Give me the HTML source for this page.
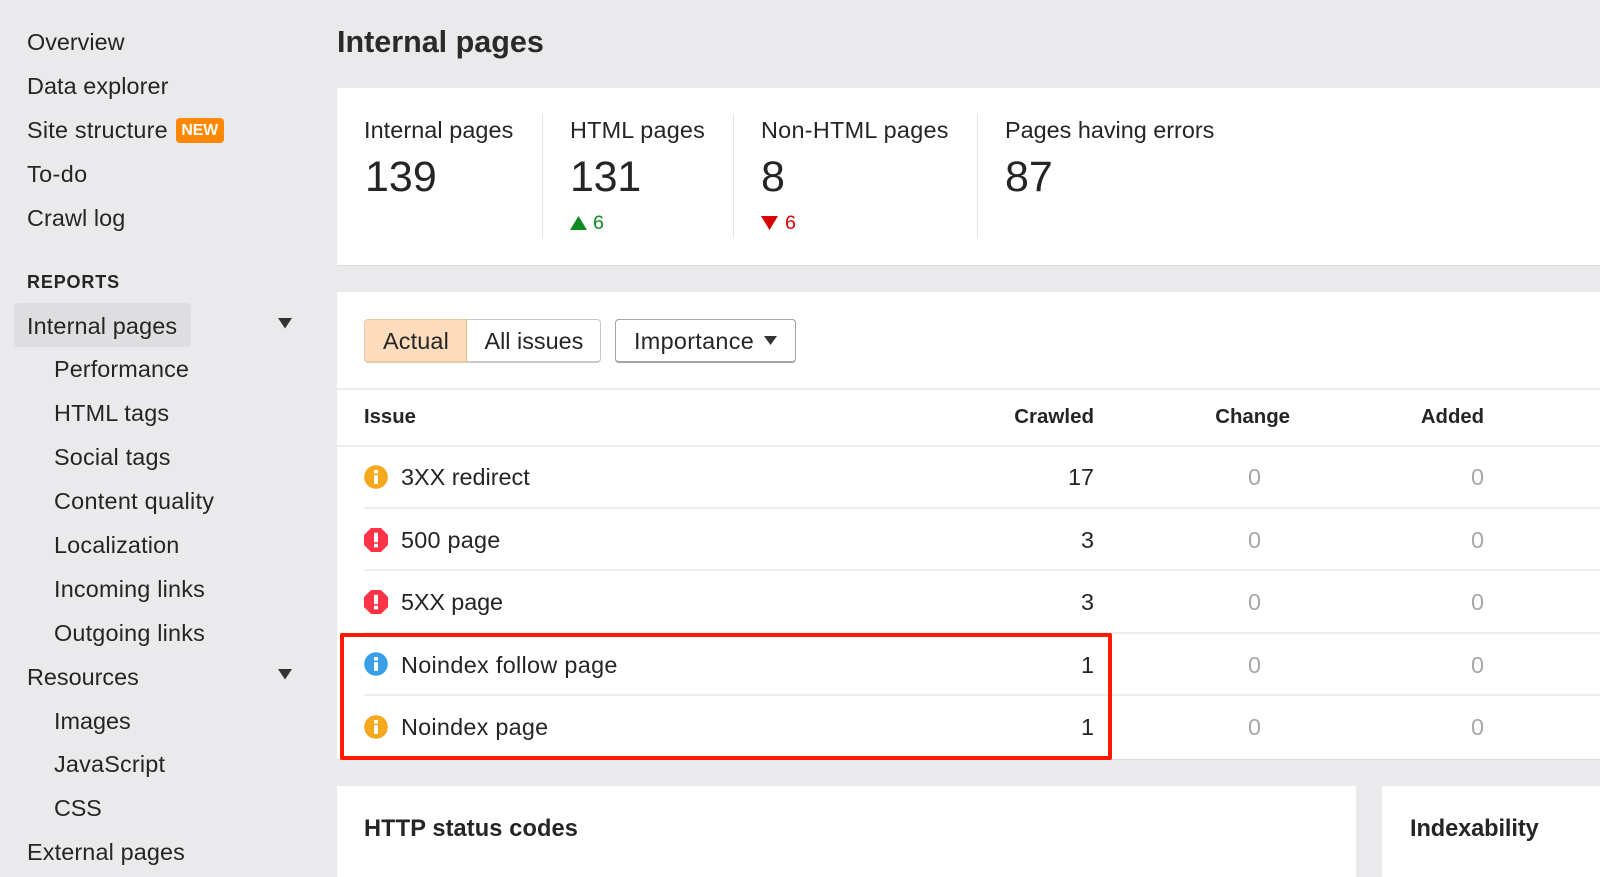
<!DOCTYPE html>
<html><head><meta charset="utf-8"><style>
html,body{margin:0;padding:0}
body{width:1600px;height:877px;overflow:hidden;background:#eaeaec;position:relative;font-family:"Liberation Sans",sans-serif;color:#252525;font-size:23.4px}
.t{position:absolute;white-space:nowrap;height:44px;line-height:44px}
.r{text-align:right}
.b{font-weight:bold}
.card{position:absolute;background:#fff;box-shadow:0 1px 0 #dcdcde}
.l{position:absolute;background:#ededef;height:2px}
.v{position:absolute;background:#e6e6e8;width:1px;top:114px;height:124px}
.g{color:#a8a8a8}
svg{position:absolute}
</style></head><body>
<div class="t" style="left:27px;top:20px">Overview</div>
<div class="t" style="left:27px;top:64px;letter-spacing:.08px">Data explorer</div>
<div class="t" style="left:27px;top:108px;letter-spacing:.22px">Site structure</div>
<div style="position:absolute;left:175.5px;top:118px;width:48.5px;height:25px;background:#ff8800;border-radius:4px;color:#fff;font-weight:bold;font-size:15.8px;line-height:26px;text-align:center">NEW</div>
<div class="t" style="left:27px;top:152px;letter-spacing:.4px">To-do</div>
<div class="t" style="left:27px;top:196px;letter-spacing:.1px">Crawl log</div>
<div class="t b" style="left:27px;top:260px;font-size:18px;letter-spacing:.85px">REPORTS</div>
<div style="position:absolute;left:13.5px;top:303px;width:177px;height:44px;background:#dedee1;border-radius:4px"></div>
<div class="t" style="left:27px;top:304px;letter-spacing:.14px">Internal pages</div>
<svg style="left:278px;top:318px" width="14" height="12"><path d="M0 0H14L7 10.5Z" fill="#333"/></svg>
<div class="t" style="left:54px;top:347px;letter-spacing:.1px">Performance</div>
<div class="t" style="left:54px;top:391px;letter-spacing:.2px">HTML tags</div>
<div class="t" style="left:54px;top:435px;letter-spacing:.2px">Social tags</div>
<div class="t" style="left:54px;top:479px;letter-spacing:.28px">Content quality</div>
<div class="t" style="left:54px;top:523px;letter-spacing:.16px">Localization</div>
<div class="t" style="left:54px;top:567px;letter-spacing:.2px">Incoming links</div>
<div class="t" style="left:54px;top:611px;letter-spacing:.2px">Outgoing links</div>
<div class="t" style="left:27px;top:655px">Resources</div>
<svg style="left:278px;top:669px" width="14" height="12"><path d="M0 0H14L7 10.5Z" fill="#333"/></svg>
<div class="t" style="left:54px;top:699px">Images</div>
<div class="t" style="left:54px;top:742px;letter-spacing:.2px">JavaScript</div>
<div class="t" style="left:54px;top:786px;letter-spacing:-.2px">CSS</div>
<div class="t" style="left:27px;top:830px;letter-spacing:.14px">External pages</div>

<div class="t b" style="left:337px;top:20px;font-size:30.5px;color:#2a2a2a">Internal pages</div>

<div class="card" style="left:337px;top:88px;width:1263px;height:177px"></div>
<div class="t" style="left:364px;top:108px;letter-spacing:.08px">Internal pages</div>
<div class="t" style="left:365px;top:155px;font-size:43px">139</div>
<div class="v" style="left:542px"></div>
<div class="t" style="left:570px;top:108px;letter-spacing:.2px">HTML pages</div>
<div class="t" style="left:570px;top:155px;font-size:43px;letter-spacing:-.3px">131</div>
<svg style="left:570px;top:216px" width="17" height="14"><path d="M8.5 0L17 14H0Z" fill="#0f8a23"/></svg>
<div class="t" style="left:593px;top:201px;font-size:19.8px;color:#0f8a23">6</div>
<div class="v" style="left:733px"></div>
<div class="t" style="left:761px;top:108px;letter-spacing:.29px">Non-HTML pages</div>
<div class="t" style="left:761px;top:155px;font-size:43px">8</div>
<svg style="left:761px;top:216px" width="17" height="14"><path d="M0 0H17L8.5 14Z" fill="#d80000"/></svg>
<div class="t" style="left:785px;top:201px;font-size:19.8px;color:#d80000">6</div>
<div class="v" style="left:977px"></div>
<div class="t" style="left:1005px;top:108px">Pages having errors</div>
<div class="t" style="left:1005px;top:155px;font-size:43px">87</div>

<div class="card" style="left:337px;top:292px;width:1263px;height:467px"></div>
<div style="position:absolute;left:364px;top:319px;width:101px;height:41px;background:#fddbbd;border:1px solid #e8c8aa;border-right:1px solid #e9b98e;border-bottom:2px solid #e8c8aa;border-radius:4px 0 0 4px"></div>
<div style="position:absolute;left:467px;top:319px;width:133px;height:41px;background:#fff;border:1px solid #c8c8c8;border-left:0;border-bottom:2px solid #c8c8c8;border-radius:0 4px 4px 0"></div>
<div style="position:absolute;left:615px;top:319px;width:179px;height:41px;background:#fff;border:1px solid #a4a4a4;border-bottom:2px solid #a4a4a4;border-radius:4px"></div>
<div class="t" style="left:383px;top:319px;letter-spacing:.15px">Actual</div>
<div class="t" style="left:484.5px;top:319px">All issues</div>
<div class="t" style="left:634px;top:319px;letter-spacing:.3px">Importance</div>
<svg style="left:764px;top:336px" width="14" height="10"><path d="M0 0H13L6.5 9Z" fill="#333"/></svg>

<div class="l" style="left:337px;top:388px;width:1263px"></div>
<div class="t b" style="left:364px;top:395px;font-size:20.3px">Issue</div>
<div class="t b r" style="left:894px;width:200px;top:395px;font-size:20.5px">Crawled</div>
<div class="t b r" style="left:1090px;width:200px;top:395px;font-size:20.4px">Change</div>
<div class="t b r" style="left:1284px;width:200px;top:395px;font-size:20.3px">Added</div>
<div class="l" style="left:337px;top:445px;width:1263px"></div>
<div class="l" style="left:364px;top:507px;width:1236px"></div>
<div class="l" style="left:364px;top:569px;width:1236px"></div>
<div class="l" style="left:364px;top:632px;width:1236px"></div>
<div class="l" style="left:364px;top:694px;width:1236px"></div>

<svg style="left:364px;top:465px" width="24" height="24"><circle cx="12" cy="12" r="11.8" fill="#f5a81c"/><rect x="10" y="5" width="4" height="3.6" fill="#fff"/><rect x="10" y="10.2" width="4" height="8.8" fill="#fff"/></svg>
<svg style="left:364px;top:528px" width="24" height="24"><path d="M7 0H17L24 7V17L17 24H7L0 17V7Z" fill="#ff3347"/><rect x="10" y="4.8" width="4" height="9.4" fill="#fff"/><rect x="10" y="15.8" width="4" height="3.6" fill="#fff"/></svg>
<svg style="left:364px;top:590px" width="24" height="24"><path d="M7 0H17L24 7V17L17 24H7L0 17V7Z" fill="#ff3347"/><rect x="10" y="4.8" width="4" height="9.4" fill="#fff"/><rect x="10" y="15.8" width="4" height="3.6" fill="#fff"/></svg>
<svg style="left:364px;top:652px" width="24" height="24"><circle cx="12" cy="12" r="11.8" fill="#3a9fe8"/><rect x="10" y="5" width="4" height="3.6" fill="#fff"/><rect x="10" y="10.2" width="4" height="8.8" fill="#fff"/></svg>
<svg style="left:364px;top:715px" width="24" height="24"><circle cx="12" cy="12" r="11.8" fill="#f5a81c"/><rect x="10" y="5" width="4" height="3.6" fill="#fff"/><rect x="10" y="10.2" width="4" height="8.8" fill="#fff"/></svg>

<div class="t" style="left:401px;top:455px">3XX redirect</div>
<div class="t" style="left:401px;top:518px;letter-spacing:.25px">500 page</div>
<div class="t" style="left:401px;top:580px;letter-spacing:-.1px">5XX page</div>
<div class="t" style="left:401px;top:643px;letter-spacing:.32px">Noindex follow page</div>
<div class="t" style="left:401px;top:705px;letter-spacing:.25px">Noindex page</div>

<div class="t r" style="left:994px;width:100px;top:455px">17</div>
<div class="t r" style="left:994px;width:100px;top:518px">3</div>
<div class="t r" style="left:994px;width:100px;top:580px">3</div>
<div class="t r" style="left:994px;width:100px;top:643px">1</div>
<div class="t r" style="left:994px;width:100px;top:705px">1</div>

<div class="t r g" style="left:1161px;width:100px;top:455px">0</div>
<div class="t r g" style="left:1161px;width:100px;top:518px">0</div>
<div class="t r g" style="left:1161px;width:100px;top:580px">0</div>
<div class="t r g" style="left:1161px;width:100px;top:643px">0</div>
<div class="t r g" style="left:1161px;width:100px;top:705px">0</div>
<div class="t r g" style="left:1384px;width:100px;top:455px">0</div>
<div class="t r g" style="left:1384px;width:100px;top:518px">0</div>
<div class="t r g" style="left:1384px;width:100px;top:580px">0</div>
<div class="t r g" style="left:1384px;width:100px;top:643px">0</div>
<div class="t r g" style="left:1384px;width:100px;top:705px">0</div>

<div style="position:absolute;left:340px;top:633px;width:764px;height:119px;border:4px solid #ff1a00;border-radius:2px"></div>

<div style="position:absolute;left:337px;top:786px;width:1019px;height:91px;background:#fff"></div>
<div style="position:absolute;left:1382px;top:786px;width:218px;height:91px;background:#fff"></div>
<div class="t b" style="left:364px;top:807px;font-size:23.6px;letter-spacing:.12px">HTTP status codes</div>
<div class="t b" style="left:1410px;top:807px;font-size:23.6px;letter-spacing:-.1px">Indexability</div>
</body></html>
